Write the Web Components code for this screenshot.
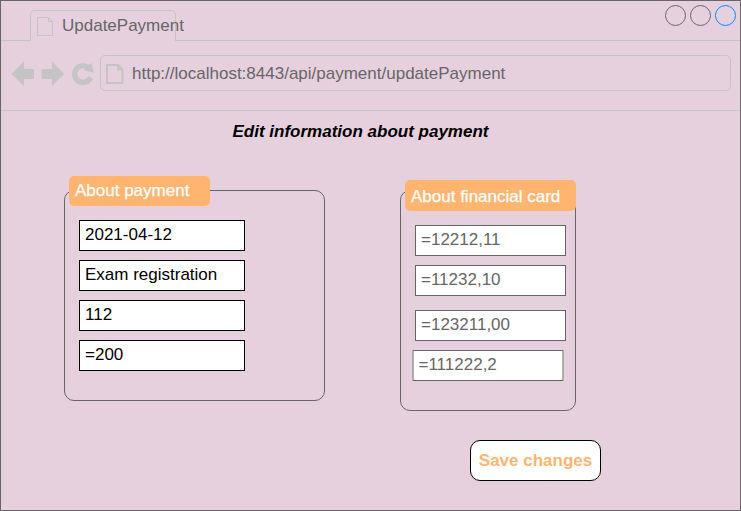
<!DOCTYPE html>
<html lang="en"><head><meta charset="utf-8"><title>UpdatePayment</title>
<style>
html,body{margin:0;height:100%;overflow:hidden}
body{font:17px/20px "Liberation Sans",Arial,sans-serif;color:#666}
</style></head><body>
<browser-window label="UpdatePayment" url="http://localhost:8443/api/payment/updatePayment">
  <payment-page></payment-page>
</browser-window>
<script>
function define(name, html, setup) {
  customElements.define(name, class extends HTMLElement {
    constructor() {
      super();
      this.attachShadow({mode: 'open'}).innerHTML = '<style>*{box-sizing:border-box}:host{display:block;box-sizing:border-box}</style>' + html;
    }
    connectedCallback() { if (setup) setup(this.shadowRoot, this); }
  });
}
define('form-field', `<style>
:host{width:166px;height:31px;border:1px solid #000;background:#fff;color:#000;padding:4px 5px;white-space:nowrap}
:host([muted]){width:151px;border-color:#666;color:#666}
</style><slot></slot>`);

define('field-group', `<style>
:host{width:261px;height:211px;border:1px solid #666;border-radius:10px;padding-left:14px}
:host([muted]){width:176px;height:221px}
header{width:141px;height:30px;margin:-15px 0 14px -10px;padding:5px 0 0 6px;border-radius:5px;background:#ffb570;color:#fff;white-space:nowrap;-webkit-text-stroke:.25px #fff}
:host([muted]) header{width:171px;height:31px;margin:-11px 0 14px -10px;padding-top:7px}
.fields{display:flex;flex-direction:column;gap:9px}
</style><header></header><div class="fields"><slot></slot></div>`,
(r, el) => r.querySelector('header').textContent = el.getAttribute('label'));

define('save-button', `<style>
:host{display:grid;place-items:center;width:131px;height:41px;border:1px solid #000;border-radius:10px;background:#fff;color:#ffb570;font-weight:bold;white-space:nowrap}
</style><span><slot></slot></span>`);

define('payment-page', `<style>
h1{font:italic bold 17px/20px "Liberation Sans",Arial,sans-serif;color:#000;margin:0;padding:11px 0 0 231.5px;height:79px}
.groups{display:flex;align-items:flex-start;gap:75px;padding-left:63px;height:250px}
save-button{margin-left:469px}
.gap{margin-top:5px}
.shift{transform:translateX(-2.5px)}
field-group[muted]{height:221px}
</style>
<h1>Edit information about payment</h1>
<div class="groups">
 <field-group label="About payment">
  <form-field>2021-04-12</form-field><form-field>Exam registration</form-field><form-field>112</form-field><form-field>=200</form-field>
 </field-group>
 <field-group label="About financial card" muted>
  <form-field muted>=12212,11</form-field><form-field muted>=11232,10</form-field><form-field muted class="gap">=123211,00</form-field><form-field muted class="shift">=111222,2</form-field>
 </field-group>
</div>
<save-button>Save changes</save-button>`);

define('window-controls', `<style>
:host{display:flex;gap:4px}
i{width:21px;height:21px;border:1px solid #666;border-radius:50%}
i:last-child{border-color:#008cff}
</style><i></i><i></i><i></i>`);

define('page-icon', `<style>svg{display:block}</style>
<svg width="20" height="22" fill="none" stroke="#c4c4c4"><path d="M2.5 2.5H13.5L17.5 6.5V20.5H2.5ZM13.5 2.5V6.5H17.5"/></svg>`,
(r, el) => { if (el.hasAttribute('bold')) { const p = r.querySelector('path'); p.setAttribute('stroke-width', 2); p.setAttribute('d', 'M2 2H13L17.5 6.5V20H2ZM13 2V6.5H17.5'); } });

define('nav-icons', `<style>svg{display:block}</style>
<svg width="88" height="28" fill="#c4c4c4"><path d="M.5 14L13 1.5V9H23V19H13V26Z"/><path d="M53 14L41 1.5V9H30.5V19H41V26Z"/>
<path d="M78 5L80.3 2.7L82.8 12.8L72.5 10L74.6 8.8A5.7 5.7 0 1 0 77.2 16.2L82 18.8A11 11 0 1 1 78 5Z"/></svg>`);

define('browser-window', `<style>
:host{width:741px;height:511px;border:1px solid #666;background:#e6d0de;overflow:hidden}
.tabs{height:40px;display:grid;grid-template-columns:29px 146px 1fr;padding-top:9px}
.line{border-bottom:1px solid #c4c4c4}
.tab{border:1px solid #c4c4c4;border-bottom:0;border-radius:5px 5px 0 0;display:flex;align-items:flex-start;padding:5px 0 0 4px;white-space:nowrap}
.tab page-icon{flex:none;margin:-1px 7px 0 0}
.last{display:flex;justify-content:flex-end;padding-right:4px}
window-controls{margin-top:-5px}
.bar{height:70px;border-bottom:1px solid #c4c4c4;display:flex;padding:14px 9px 0 10px}
nav-icons{margin-top:5px;flex:none;width:89px}
.address{height:36px;flex:1;border:1px solid #c4c4c4;border-radius:5px;display:flex;padding:6px 0 0 4px}
.address page-icon{margin-top:1px;flex:none}
.url{margin:2px 0 0 7px}
</style>
<div class="tabs"><div class="line"></div><div class="tab"><page-icon></page-icon><span class="label"></span></div><div class="line last"><window-controls></window-controls></div></div>
<div class="bar"><nav-icons></nav-icons><div class="address"><page-icon bold></page-icon><span class="url"></span></div></div>
<slot></slot>`, (r, el) => {
  r.querySelector('.label').textContent = el.getAttribute('label');
  r.querySelector('.url').textContent = el.getAttribute('url');
});
</script></body></html>
